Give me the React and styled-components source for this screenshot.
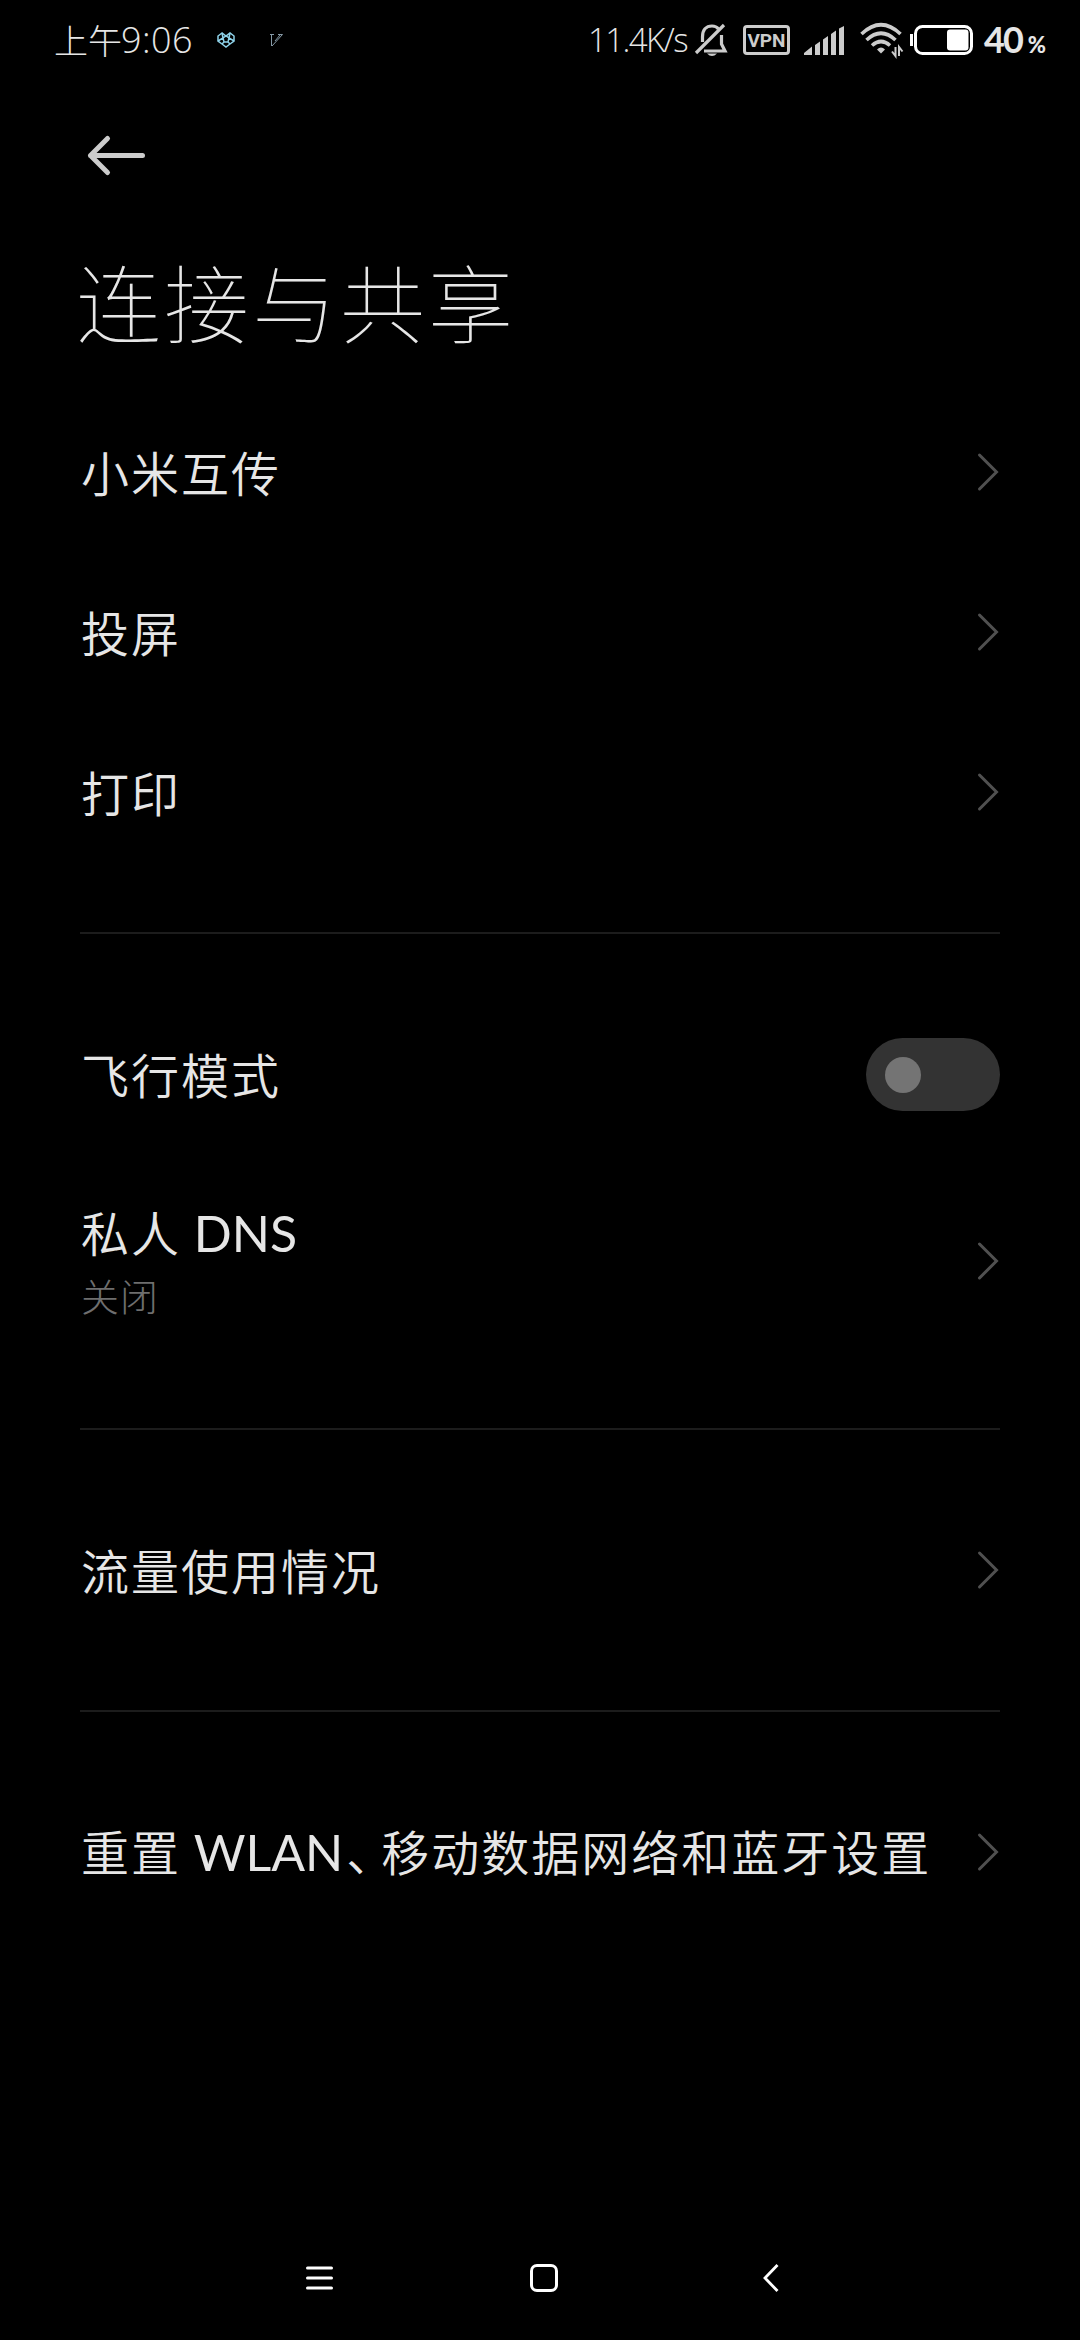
import React from "react";
import styled, { createGlobalStyle } from "styled-components";

const GlobalStyle = createGlobalStyle`
  * {
    box-sizing: border-box;
  }
  body {
    margin: 0;
    background: #000;
  }
`;
const Screen = styled.div`
  width: 1080px;
  height: 2340px;
  display: flex;
  flex-direction: column;
  overflow: hidden;
  background: #000;
  color: #e6e6e6;
  font-family: "Noto Sans CJK SC", sans-serif;
  font-weight: 300;
`;
const StatusBar = styled.header`
  height: 80px;
  display: flex;
  align-items: center;
  justify-content: space-between;
  padding: 0 34px 0 54px;
  line-height: 80px;
`;
const StatusSide = styled.div`
  display: flex;
  align-items: center;
  height: 80px;
`;
const Clock = styled.div`
  display: flex;
  width: 163px;
  font-size: 34px;
  white-space: nowrap;
`;
const Digits = styled.span`
  font-family: "Open Sans", sans-serif;
  font-size: 36px;
  letter-spacing: 0.4px;
  margin-left: -1px;
`;
const Speed = styled.div`
  width: 107px;
  font-family: "Open Sans", sans-serif;
  font-size: 33px;
  letter-spacing: -1.6px;
  white-space: nowrap;
`;
const Vpn = styled.div`
  width: 47px;
  height: 30px;
  margin: 0 14px 0 16px;
  border: 3px solid #ccc;
  border-radius: 4px;
  color: #ccc;
  font-family: "Roboto", sans-serif;
  font-weight: 700;
  font-size: 19px;
  line-height: 25px;
  text-align: center;
`;
const Battery = styled.div`
  width: 73px;
  padding: 3px 0 0 11px;
  font-family: "Lato", sans-serif;
  font-weight: 700;
  display: flex;
  align-items: baseline;
  font-size: 36px;
  letter-spacing: -2px;
  white-space: nowrap;
`;
const Percent = styled.span`
  font-size: 22px;
  font-weight: 900;
  margin-left: 6px;
`;
const Icon = styled.svg`
  display: block;
  flex: none;
  overflow: visible;
  margin-left: ${(p) => p.$gap || 0}px;
`;
const ActionBar = styled.div`
  height: 150px;
  padding: 54px 86px 0;
`;
const Title = styled.h1`
  height: 162px;
  margin: 0;
  padding-left: 76px;
  font-size: 85px;
  font-weight: 100;
  letter-spacing: 3px;
  line-height: 139px;
`;
const Content = styled.main`
  flex: 1;
  padding: 0 80px;
`;
const Group = styled.section`
  & + & {
    margin-top: 60px;
    padding-top: 60px;
    border-top: 2px solid #1c1c1c;
  }
`;
const Row = styled.div`
  display: flex;
  align-items: center;
  justify-content: space-between;
  height: ${(p) => (p.$tall ? 214 : 160)}px;
`;
const Label = styled.div`
  padding: 0 0 2px 1px;
  font-size: 48px;
  font-weight: 350;
  letter-spacing: 2px;
  line-height: 64px;
  white-space: pre;
`;
const Latin = styled.span`
  font-family: "Lato", sans-serif;
  font-weight: 400;
  font-size: 50px;
  letter-spacing: 0;
`;
const Comma = styled.span`
  margin: 0 9px 0 3px;
  font-feature-settings: "halt";
`;
const Summary = styled.div`
  padding-left: 1px;
  font-size: 38px;
  letter-spacing: 1px;
  line-height: 56px;
  color: #6e6e6e;
`;
const Switch = styled.div`
  width: 134px;
  height: 73px;
  padding: 19px;
  border-radius: 37px;
  background: #333;
`;
const Thumb = styled.div`
  width: 36px;
  height: 36px;
  border-radius: 50%;
  background: #747474;
`;
const NavBar = styled.nav`
  display: flex;
  align-items: center;
  height: 124px;
  padding-left: 306px;
`;

const Chevron = () => (
  <Icon width="22" height="38" viewBox="0 0 22 38" fill="none" stroke="#505050" strokeWidth="3">
    <path d="M1.5 2 L18.5 19 L1.5 36" strokeLinecap="round" />
  </Icon>
);

const groups = [
  [{ label: "小米互传" }, { label: "投屏" }, { label: "打印" }],
  [
    { label: "飞行模式", toggle: true },
    { label: <>私人 <Latin>DNS</Latin></>, summary: "关闭" },
  ],
  [{ label: "流量使用情况" }],
  [
    {
      label: (
        <>
          重置 <Latin>WLAN</Latin>
          <Comma>、</Comma>移动数据网络和蓝牙设置
        </>
      ),
    },
  ],
];

const App = () => {
  return (
    <>
      <GlobalStyle />
      <Screen>
        <StatusBar>
          <StatusSide>
            <Clock>
              上午<Digits>9:06</Digits>
            </Clock>
            <Icon width="18" height="16" viewBox="0 0 18 16" fill="none" stroke="#8fd3ea" strokeWidth="1.5">
              <path d="M5 1 L1 4 V9 L5 12 L9 15 L13 12 L17 9 V4 L13 1 L9 4 Z" />
              <path d="M5 1 L6 6 L1 9 M13 1 L12 6 L17 9 M6 6 L9 4 L12 6 L11 10 H7 Z M5 12 L7 10 M13 12 L11 10" />
            </Icon>
            <Icon $gap="35" width="13" height="13" viewBox="0 0 13 13" fill="none" stroke="#8599a6" strokeWidth="1">
              <path d="M0 0.5 H4 M1.5 1 V12 M2 12 L12.5 0.5 M5 7 L10 1 M8 0.5 H12.5" />
            </Icon>
          </StatusSide>
          <StatusSide>
            <Speed>11.4K/s</Speed>
            <Icon width="32" height="33" viewBox="0 0 32 33" fill="none" stroke="#ccc" strokeWidth="3.2">
              <path d="M7.5 18 V13 C7.5 6 11 2 17 2 C20 2 22 3 23.5 5 M26.5 11 V20 L30 27 H9" />
              <path d="M1 29 L29 1" />
              <path d="M12 29.5 H22 Q17 34.5 12 29.5 Z" fill="#ccc" stroke="none" />
            </Icon>
            <Vpn>VPN</Vpn>
            <Icon width="40" height="29" viewBox="0 0 40 29" fill="#ccc">
              <path d="M0 27 L8 20.5 V29 H0 Z M11 19 L16 15.5 V29 H11 Z M19 13.5 L24 10 V29 H19 Z M27 8 L32 4.5 V29 H27 Z M35 2.5 L40 0 V29 H35 Z" />
            </Icon>
            <Icon $gap="16" width="43" height="34" viewBox="0 0 43 34" fill="none" stroke="#ccc" strokeWidth="3.6">
              <path d="M1.5 11 Q21 -7.5 40.5 11" />
              <path d="M6.5 17 Q21 3.5 35.5 17" />
              <path d="M12 22.5 Q21 14.5 30 22.5" />
              <path d="M17 26.5 Q21 22.5 25 26.5 L21 30.5 Z" fill="#ccc" stroke="none" />
              <path d="M35.5 24 V33 L32 28.5 M39 33 V24 L42.5 28.5" strokeWidth="2" />
            </Icon>
            <Icon $gap="7" width="63" height="30" viewBox="0 0 63 30">
              <rect x="0" y="9" width="3" height="12" fill="#fff" />
              <rect x="5.5" y="1.5" width="56" height="27" rx="7" fill="none" stroke="#fff" strokeWidth="3" />
              <rect x="37" y="4.5" width="21.5" height="21" rx="3" fill="#fff" />
            </Icon>
            <Battery>
              40<Percent>%</Percent>
            </Battery>
          </StatusSide>
        </StatusBar>
        <ActionBar>
          <Icon width="60" height="42" viewBox="0 0 60 42" fill="none" stroke="#ccc" strokeWidth="5" strokeLinecap="round" strokeLinejoin="round">
            <path d="M21.5 4.5 L4.5 21.5 L21.5 38.5 M4.5 21.5 H56.5" />
          </Icon>
        </ActionBar>
        <Title>连接与共享</Title>
        <Content>
          {groups.map((rows, i) => (
            <Group key={i}>
              {rows.map((row, j) => (
                <Row key={j} $tall={!!row.summary}>
                  <div>
                    <Label>{row.label}</Label>
                    {row.summary && <Summary>{row.summary}</Summary>}
                  </div>
                  {row.toggle ? (
                    <Switch>
                      <Thumb />
                    </Switch>
                  ) : (
                    <Chevron />
                  )}
                </Row>
              ))}
            </Group>
          ))}
        </Content>
        <NavBar>
          <Icon width="27" height="24" viewBox="0 0 27 24" stroke="#fff" strokeWidth="3" strokeLinecap="round">
            <path d="M1.5 2 H25.5 M1.5 12 H25.5 M1.5 22 H25.5" />
          </Icon>
          <Icon $gap="197" width="28" height="28" viewBox="0 0 28 28" fill="none" stroke="#fff" strokeWidth="3">
            <rect x="1.5" y="1.5" width="25" height="25" rx="5.5" />
          </Icon>
          <Icon $gap="205" width="16" height="28" viewBox="0 0 16 28" fill="none" stroke="#fff" strokeWidth="2.8">
            <path d="M14.5 1 L2 14 L14.5 27" />
          </Icon>
        </NavBar>
      </Screen>
    </>
  );
};

export default App;
